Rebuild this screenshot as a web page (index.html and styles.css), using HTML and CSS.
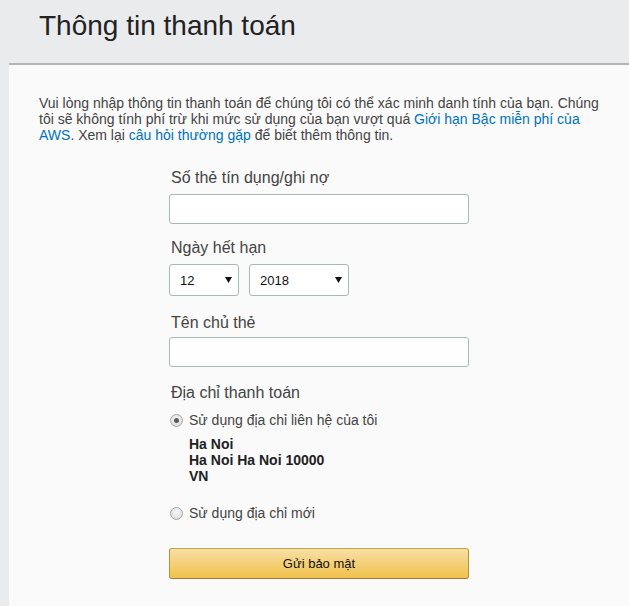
FILE: index.html
```html
<!DOCTYPE html>
<html lang="vi">
<head>
<meta charset="utf-8">
<title>Thông tin thanh toán</title>
<link rel="stylesheet" href="styles.css">
</head>
<body>
<header class="page-header">
  <h1 class="title">Thông tin thanh toán</h1>
</header>
<main class="panel">
  <p class="intro">Vui lòng nhập thông tin thanh toán để chúng tôi có thể xác minh danh tính của bạn. Chúng tôi sẽ không tính phí trừ khi mức sử dụng của bạn vượt quá <a class="link" href="#">Giới hạn Bậc miễn phí của AWS</a>. Xem lại <a class="link" href="#">câu hỏi thường gặp</a> để biết thêm thông tin.</p>
  <form class="form">
    <div class="field">
      <label class="label">Số thẻ tín dụng/ghi nợ</label>
      <input class="text-input" type="text">
    </div>
    <div class="field field-expiry">
      <label class="label">Ngày hết hạn</label>
      <div class="expiry">
        <div class="select select-month"><span class="select-value">12</span><svg class="arrow" width="7" height="6" viewBox="0 0 7 6"><path d="M0 0H7L3.5 6Z" fill="#111"/></svg></div>
        <div class="select select-year"><span class="select-value">2018</span><svg class="arrow" width="7" height="6" viewBox="0 0 7 6"><path d="M0 0H7L3.5 6Z" fill="#111"/></svg></div>
      </div>
    </div>
    <div class="field field-name">
      <label class="label">Tên chủ thẻ</label>
      <input class="text-input" type="text">
    </div>
    <div class="field field-address">
      <span class="label">Địa chỉ thanh toán</span>
      <label class="radio-row"><span class="radio radio-checked"></span><span class="radio-text">Sử dụng địa chỉ liên hệ của tôi</span></label>
      <div class="address">
        <div>Ha Noi</div>
        <div>Ha Noi Ha Noi 10000</div>
        <div>VN</div>
      </div>
      <label class="radio-row radio-row-new"><span class="radio"></span><span class="radio-text">Sử dụng địa chỉ mới</span></label>
    </div>
    <button class="submit" type="button">Gửi bảo mật</button>
  </form>
</main>
</body>
</html>
```

FILE: styles.css
```css
html, body {
  margin: 0;
  padding: 0;
}
body {
  background: #eaebec;
  font-family: "Liberation Sans", Arial, sans-serif;
  color: #444;
  min-height: 606px;
}
.page-header {
  height: 63px;
  box-sizing: border-box;
  padding: 10px 0 0 39px;
}
.title {
  margin: 0;
  font-size: 28px;
  line-height: 32px;
  font-weight: normal;
  color: #222;
}
.panel {
  display: block;
  margin-left: 9px;
  border-top: 2px solid #b5b5b5;
  background: #fafafa;
  padding: 30px 30px 40px 30px;
  min-height: 500px;
}
.intro {
  margin: 0;
  font-size: 14px;
  line-height: 16px;
  color: #444;
}
.link {
  color: #0073bb;
  text-decoration: none;
}
.form {
  margin: 26px 0 0 130px;
  width: 300px;
  display: flex;
  flex-direction: column;
}
.field {
  display: flex;
  flex-direction: column;
  margin-bottom: 15px;
}
.field-expiry {
  margin-bottom: 18px;
}
.field-name {
  margin-bottom: 17px;
}
.label {
  display: block;
  font-size: 16px;
  line-height: 18px;
  color: #444;
  padding-left: 2px;
  margin-bottom: 7px;
}
.field-name .label {
  margin-bottom: 5px;
}
.text-input {
  box-sizing: border-box;
  width: 300px;
  height: 30px;
  margin: 0;
  border: 1px solid #aab7b8;
  border-radius: 3px;
  background: #fff;
  font: 14px "Liberation Sans", Arial, sans-serif;
}
.expiry {
  display: flex;
  gap: 10px;
}
.select {
  box-sizing: border-box;
  height: 32px;
  border: 1px solid #aab7b8;
  border-radius: 3px;
  background: #fff;
  display: flex;
  align-items: center;
  justify-content: space-between;
  padding: 0 6px 0 10px;
  font-size: 13px;
  color: #111;
}
.select-month {
  width: 70px;
}
.select-year {
  width: 100px;
}
.arrow {
  display: block;
}
.field-address {
  margin-bottom: 0;
}
.radio-row {
  display: flex;
  align-items: center;
  height: 18px;
  margin-top: 2px;
}
.radio {
  box-sizing: border-box;
  width: 13px;
  height: 13px;
  margin-left: 1px;
  border-radius: 50%;
  border: 1px solid #a6a6a6;
  background: radial-gradient(circle at 50% 40%, #f7f7f7 0%, #e6e6e6 55%, #cfcfcf 100%);
  display: flex;
  align-items: center;
  justify-content: center;
  flex: none;
}
.radio-checked::after {
  content: "";
  width: 5px;
  height: 5px;
  border-radius: 50%;
  background: #5a5a5a;
}
.radio-text {
  margin-left: 6px;
  font-size: 14px;
  color: #444;
}
.address {
  margin: 7px 0 0 20px;
  font-size: 14px;
  line-height: 16px;
  font-weight: bold;
  color: #222;
}
.radio-row-new {
  margin-top: 20px;
}
.submit {
  margin-top: 26px;
  box-sizing: border-box;
  width: 300px;
  height: 31px;
  border: 1px solid #a88734;
  border-color: #c9a443 #b99232 #9c7e31;
  border-radius: 3px;
  background: linear-gradient(to bottom, #f7dfa5, #f0c14b);
  font: 13px "Liberation Sans", Arial, sans-serif;
  color: #111;
  padding: 0;
}
```
